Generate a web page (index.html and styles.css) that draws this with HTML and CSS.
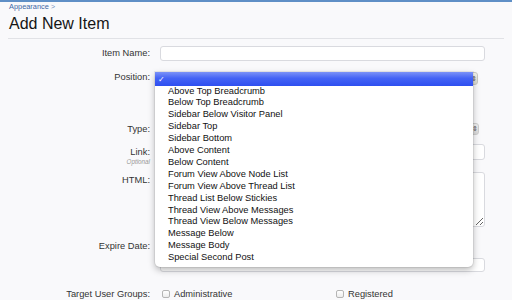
FILE: index.html
```html
<!DOCTYPE html>
<html>
<head>
<meta charset="utf-8">
<link rel="stylesheet" href="styles.css">
</head>
<body>
<div class="page">
  <div class="breadcrumb"><a href="#">Appearance</a> <span class="crumb-arrow">&gt;</span></div>
  <h1 class="title">Add New Item</h1>
  <div class="rule"></div>

  <div class="row row-name">
    <div class="label">Item Name:</div>
    <div class="control"><input class="text-input" type="text"></div>
  </div>

  <div class="row row-position">
    <div class="label">Position:</div>
    <div class="control">
      <div class="select-wrap">
        <div class="select select-position"><span class="arrows">&#8661;</span></div>
        <div class="menu">
          <div class="menu-selected"><span class="check">&#10003;</span></div>
          <ul class="menu-list">
            <li>Above Top Breadcrumb</li>
            <li>Below Top Breadcrumb</li>
            <li>Sidebar Below Visitor Panel</li>
            <li>Sidebar Top</li>
            <li>Sidebar Bottom</li>
            <li>Above Content</li>
            <li>Below Content</li>
            <li>Forum View Above Node List</li>
            <li>Forum View Above Thread List</li>
            <li>Thread List Below Stickies</li>
            <li>Thread View Above Messages</li>
            <li>Thread View Below Messages</li>
            <li>Message Below</li>
            <li>Message Body</li>
            <li>Special Second Post</li>
          </ul>
        </div>
      </div>
    </div>
  </div>

  <div class="row row-type">
    <div class="label">Type:</div>
    <div class="control"><div class="select select-type"><span class="arrows">&#8661;</span></div></div>
  </div>

  <div class="row row-link">
    <div class="label">Link:<span class="hint">Optional</span></div>
    <div class="control"><input class="text-input link-input" type="text"></div>
  </div>

  <div class="row row-html">
    <div class="label">HTML:</div>
    <div class="control"><textarea class="textarea"></textarea></div>
  </div>

  <div class="row row-expire">
    <div class="label">Expire Date:</div>
    <div class="control"><div class="expire-spacer"></div><input class="text-input expire-input" type="text"></div>
  </div>

  <div class="row row-groups">
    <div class="label">Target User Groups:</div>
    <div class="control groups">
      <label class="check-item"><span class="box"></span>Administrative</label>
      <label class="check-item"><span class="box"></span>Registered</label>
    </div>
  </div>
</div>
</body>
</html>
```

FILE: styles.css
```css
html, body {
  margin: 0;
  padding: 0;
}
body {
  background: #f9f9fb;
  border-top: 2px solid #5f8fc6;
  font-family: "Liberation Sans", Arial, sans-serif;
  color: #2b2b2b;
  overflow: hidden;
  height: 298px;
}
.page {
  padding: 0 27px 0 9px;
}
.breadcrumb {
  font-size: 7.4px;
  line-height: 10px;
  height: 10px;
}
.breadcrumb a {
  color: #3d68a6;
  text-decoration: none;
}
.crumb-arrow {
  color: #6d8fbd;
  font-size: 7px;
}
.title {
  margin: 2px 0 0 0;
  font-size: 16px;
  line-height: 20px;
  font-weight: normal;
  color: #151515;
}
.rule {
  margin: 4px -19px 0 -1px;
  height: 1px;
  background: #e1e2e6;
}
.row {
  display: flex;
  gap: 10px;
  font-size: 9.3px;
}
.label {
  width: 141px;
  flex: none;
  text-align: right;
  line-height: 12px;
  color: #333;
}
.control {
  flex: 1;
  min-width: 0;
}
.text-input, .textarea {
  display: block;
  box-sizing: border-box;
  width: 100%;
  margin: 0;
  border: 1px solid #d9dadf;
  border-radius: 3px;
  background: #fff;
  padding: 0;
  outline: none;
}
.row-name { margin-top: 7px; }
.row-name .label { padding-top: 1px; }
.row-name .text-input { height: 15px; }

.row-position { margin-top: 11px; }
.row-position .label { margin-top: -1px; }
.select-wrap {
  position: relative;
  margin-left: -5px;
  width: 323px;
}
.select {
  box-sizing: border-box;
  height: 13px;
  border: 1px solid #c9c9c2;
  border-radius: 3px;
  background: linear-gradient(#f4f4ec, #dcdcd2);
  position: relative;
}
.arrows {
  position: absolute;
  right: 0;
  top: -1px;
  font-size: 7px;
  line-height: 13px;
  color: #555;
}
.menu {
  position: absolute;
  left: 0;
  top: 0;
  width: 318px;
  height: 195px;
  background: #fff;
  border-radius: 0 0 5px 5px;
  box-shadow: 0 3px 7px rgba(0, 0, 0, 0.28), 0 0 0 1px rgba(0, 0, 0, 0.06);
  z-index: 5;
}
.menu-selected {
  height: 13.5px;
  background: linear-gradient(#7b92f8, #4463f5 45%, #2e4ff0);
  color: #fff;
  font-size: 10px;
  line-height: 13.5px;
  padding-left: 3px;
}
.check {
  font-family: "DejaVu Sans", sans-serif;
  font-size: 8px;
}
.menu-list {
  list-style: none;
  margin: 0;
  padding: 0 0 0 13px;
  font-size: 9.3px;
  line-height: 11.9px;
  color: #111;
}

.row-type { margin-top: 38px; }
.row-type .label { padding-top: 0; }
.select-type {
  margin-left: -5px;
  width: 324px;
  height: 12px;
  background: linear-gradient(#f1f1f1, #dadada);
  border-color: #cfcfcf;
}
.select-type .arrows { line-height: 12px; }

.row-link { margin-top: 9px; height: 16px; }
.row-link .label { padding-top: 2px; }
.hint {
  display: block;
  font-size: 6.3px;
  line-height: 8px;
  font-style: italic;
  color: #999;
}
.link-input { height: 16px; }

.row-html { margin-top: 12px; }
.row-html .label { padding-top: 2px; }
.textarea {
  height: 55px;
  resize: vertical;
}

.row-expire { margin-top: 13px; }
.row-expire .label { padding-top: 0; }
.expire-spacer { height: 18px; }
.expire-input { height: 14px; }

.row-groups { margin-top: 16px; }
.groups {
  display: grid;
  grid-template-columns: 174px 174px;
  padding-left: 2px;
}
.check-item {
  display: flex;
  align-items: center;
  gap: 4px;
  line-height: 12px;
  color: #333;
}
.box {
  display: inline-block;
  width: 6px;
  height: 6px;
  border: 1px solid #b5b5b5;
  border-radius: 2px;
  background: linear-gradient(#fff, #ececec);
}
```
